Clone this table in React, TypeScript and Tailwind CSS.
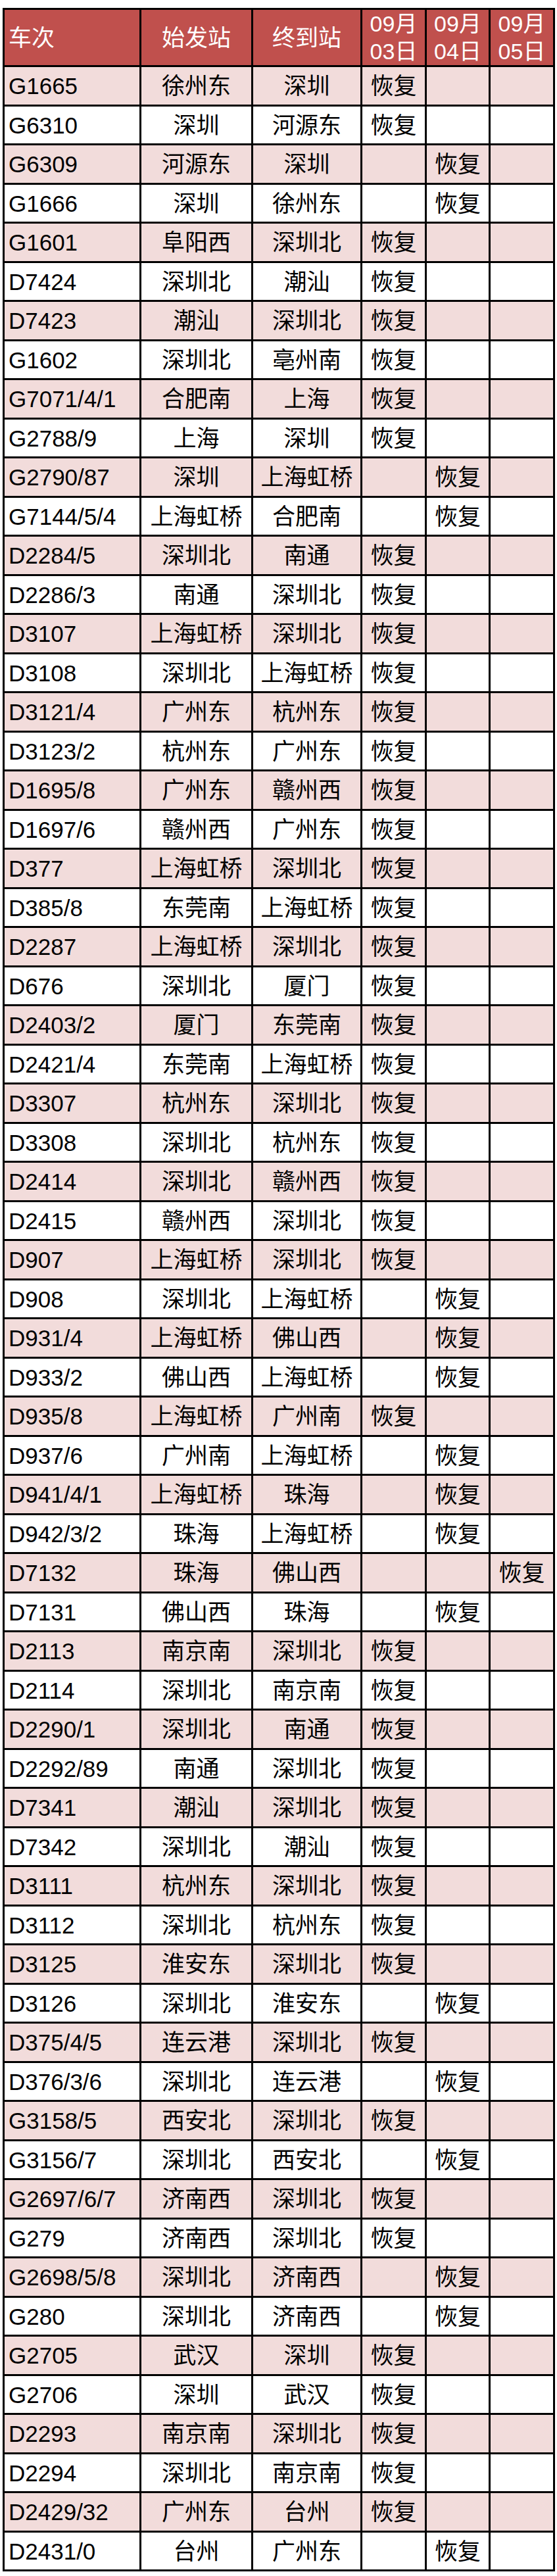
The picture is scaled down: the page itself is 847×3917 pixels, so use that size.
const rows: [string, string, string, number][] = [
  ['G1665', '徐州东', '深圳', 0],
  ['G6310', '深圳', '河源东', 0],
  ['G6309', '河源东', '深圳', 1],
  ['G1666', '深圳', '徐州东', 1],
  ['G1601', '阜阳西', '深圳北', 0],
  ['D7424', '深圳北', '潮汕', 0],
  ['D7423', '潮汕', '深圳北', 0],
  ['G1602', '深圳北', '亳州南', 0],
  ['G7071/4/1', '合肥南', '上海', 0],
  ['G2788/9', '上海', '深圳', 0],
  ['G2790/87', '深圳', '上海虹桥', 1],
  ['G7144/5/4', '上海虹桥', '合肥南', 1],
  ['D2284/5', '深圳北', '南通', 0],
  ['D2286/3', '南通', '深圳北', 0],
  ['D3107', '上海虹桥', '深圳北', 0],
  ['D3108', '深圳北', '上海虹桥', 0],
  ['D3121/4', '广州东', '杭州东', 0],
  ['D3123/2', '杭州东', '广州东', 0],
  ['D1695/8', '广州东', '赣州西', 0],
  ['D1697/6', '赣州西', '广州东', 0],
  ['D377', '上海虹桥', '深圳北', 0],
  ['D385/8', '东莞南', '上海虹桥', 0],
  ['D2287', '上海虹桥', '深圳北', 0],
  ['D676', '深圳北', '厦门', 0],
  ['D2403/2', '厦门', '东莞南', 0],
  ['D2421/4', '东莞南', '上海虹桥', 0],
  ['D3307', '杭州东', '深圳北', 0],
  ['D3308', '深圳北', '杭州东', 0],
  ['D2414', '深圳北', '赣州西', 0],
  ['D2415', '赣州西', '深圳北', 0],
  ['D907', '上海虹桥', '深圳北', 0],
  ['D908', '深圳北', '上海虹桥', 1],
  ['D931/4', '上海虹桥', '佛山西', 1],
  ['D933/2', '佛山西', '上海虹桥', 1],
  ['D935/8', '上海虹桥', '广州南', 0],
  ['D937/6', '广州南', '上海虹桥', 1],
  ['D941/4/1', '上海虹桥', '珠海', 1],
  ['D942/3/2', '珠海', '上海虹桥', 1],
  ['D7132', '珠海', '佛山西', 2],
  ['D7131', '佛山西', '珠海', 1],
  ['D2113', '南京南', '深圳北', 0],
  ['D2114', '深圳北', '南京南', 0],
  ['D2290/1', '深圳北', '南通', 0],
  ['D2292/89', '南通', '深圳北', 0],
  ['D7341', '潮汕', '深圳北', 0],
  ['D7342', '深圳北', '潮汕', 0],
  ['D3111', '杭州东', '深圳北', 0],
  ['D3112', '深圳北', '杭州东', 0],
  ['D3125', '淮安东', '深圳北', 0],
  ['D3126', '深圳北', '淮安东', 1],
  ['D375/4/5', '连云港', '深圳北', 0],
  ['D376/3/6', '深圳北', '连云港', 1],
  ['G3158/5', '西安北', '深圳北', 0],
  ['G3156/7', '深圳北', '西安北', 1],
  ['G2697/6/7', '济南西', '深圳北', 0],
  ['G279', '济南西', '深圳北', 0],
  ['G2698/5/8', '深圳北', '济南西', 1],
  ['G280', '深圳北', '济南西', 1],
  ['G2705', '武汉', '深圳', 0],
  ['G2706', '深圳', '武汉', 0],
  ['D2293', '南京南', '深圳北', 0],
  ['D2294', '深圳北', '南京南', 0],
  ['D2429/32', '广州东', '台州', 0],
  ['D2431/0', '台州', '广州东', 1],
]

const dates = ['03', '04', '05']

export default function App() {
  return (
    <div className="min-h-[3917px] bg-white pt-[12px] pl-[4px] font-['Liberation_Sans','Noto_Sans_CJK_SC',sans-serif] text-black">
      <table className="w-[840px] table-fixed border-collapse border-[3px] border-black text-[35px] leading-none">
        <colgroup>
          <col className="w-[208px]" />
          <col className="w-[170px]" />
          <col className="w-[166px]" />
          <col className="w-[98px]" />
          <col className="w-[97px]" />
          <col className="w-[98px]" />
        </colgroup>
        <thead>
          <tr className="h-[86px] bg-[#c0504d] text-white">
            <th className="border-[3px] border-black pl-[6px] text-left font-normal">车次</th>
            <th className="border-[3px] border-black font-normal">始发站</th>
            <th className="border-[3px] border-black font-normal">终到站</th>
            {dates.map((d) => (
              <th key={d} className="border-[3px] border-black text-[34px] font-normal leading-[42px]">
                09月
                <br />
                {d}日
              </th>
            ))}
          </tr>
        </thead>
        <tbody>
          {rows.map(([no, from, to, day], i) => (
            <tr key={no} className={i % 2 === 0 ? 'h-[60px] bg-[#f2dcdb]' : 'h-[59px] bg-white'}>
              <td className="border-[3px] border-black pl-[6px] whitespace-nowrap">{no}</td>
              <td className="border-[3px] border-black text-center">{from}</td>
              <td className="border-[3px] border-black text-center">{to}</td>
              {dates.map((d, j) => (
                <td key={d} className="border-[3px] border-black text-center">
                  {day === j ? '恢复' : ''}
                </td>
              ))}
            </tr>
          ))}
        </tbody>
      </table>
    </div>
  )
}
